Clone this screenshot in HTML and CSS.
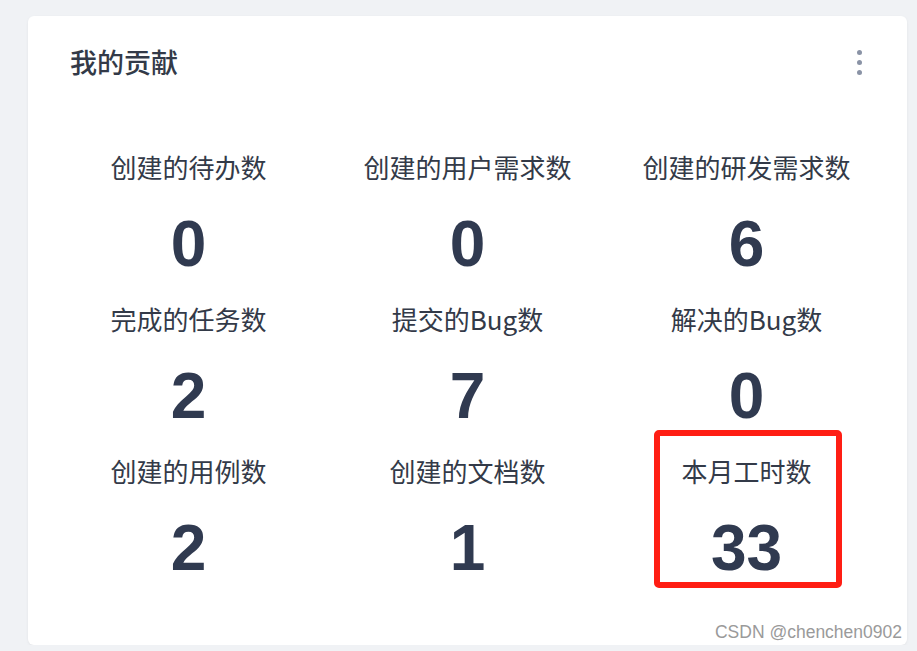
FILE: index.html
```html
<!DOCTYPE html>
<html lang="zh-CN">
<head>
    <meta charset="UTF-8">
    <meta name="viewport" content="width=device-width, initial-scale=1.0">
    <title>我的贡献</title>
    <link rel="stylesheet" href="styles.css">
</head>
<body>

    <div class="card">
        <div class="card-header">
            <h2>我的贡献</h2>
            <!-- 更多菜单 -->
            <div class="more">
                <span></span><span></span><span></span>
            </div>
        </div>

        <div class="stats">
            <div class="stat">
                <div class="label">创建的待办数</div>
                <div class="num">0</div>
            </div>
            <div class="stat">
                <div class="label">创建的用户需求数</div>
                <div class="num">0</div>
            </div>
            <div class="stat">
                <div class="label">创建的研发需求数</div>
                <div class="num">6</div>
            </div>
            <div class="stat">
                <div class="label">完成的任务数</div>
                <div class="num">2</div>
            </div>
            <div class="stat">
                <div class="label">提交的Bug数</div>
                <div class="num">7</div>
            </div>
            <div class="stat">
                <div class="label">解决的Bug数</div>
                <div class="num">0</div>
            </div>
            <div class="stat">
                <div class="label">创建的用例数</div>
                <div class="num">2</div>
            </div>
            <div class="stat">
                <div class="label">创建的文档数</div>
                <div class="num">1</div>
            </div>
            <div class="stat marked">
                <div class="label">本月工时数</div>
                <div class="num">33</div>
                <div class="mark"></div>
            </div>
        </div>

        <div class="watermark">CSDN @chenchen0902</div>
    </div>

</body>
</html>
```

FILE: styles.css
```css
body {
    margin: 0;
    background-color: #f0f2f5;
    font-family: "Noto Sans CJK SC", "Noto Sans", sans-serif;
}
.card {
    position: relative;
    box-sizing: border-box;
    width: 879px;
    height: 629px;
    margin: 16px 0 0 28px;
    padding: 26px 21px 0 21px;
    background-color: #fff;
    border-radius: 6px;
    box-shadow: 0 1px 3px rgba(0, 0, 0, 0.06);
}
.card-header {
    display: flex;
    justify-content: space-between;
    align-items: center;
    padding: 0 0 0 21px;
}
.card-header h2 {
    margin: 0;
    font-size: 27px;
    font-weight: 500;
    line-height: 40px;
    color: #333a48;
}
.more {
    display: flex;
    flex-direction: column;
    gap: 5px;
    margin-right: 24px;
}
.more span {
    width: 5px;
    height: 5px;
    border-radius: 50%;
    background-color: #8a93a6;
}
.stats {
    display: grid;
    grid-template-columns: repeat(3, 1fr);
    row-gap: 17px;
    margin-top: 65px;
}
.stat {
    position: relative;
    text-align: center;
}
.label {
    font-size: 26px;
    line-height: 40px;
    color: #333a48;
}
.num {
    margin-top: 19px;
    font-family: "Liberation Sans", Arial, sans-serif;
    font-weight: bold;
    font-size: 64px;
    line-height: 76px;
    color: #303a50;
}
/* 标注框 */
.mark {
    position: absolute;
    left: 47px;
    top: -21px;
    width: 188px;
    height: 158px;
    box-sizing: border-box;
    border: 6px solid #ff1e14;
    border-radius: 5px;
}
.watermark {
    position: absolute;
    right: 5px;
    bottom: 2px;
    font-family: "Liberation Sans", Arial, sans-serif;
    font-size: 17.5px;
    color: #9a9a9a;
}
```
